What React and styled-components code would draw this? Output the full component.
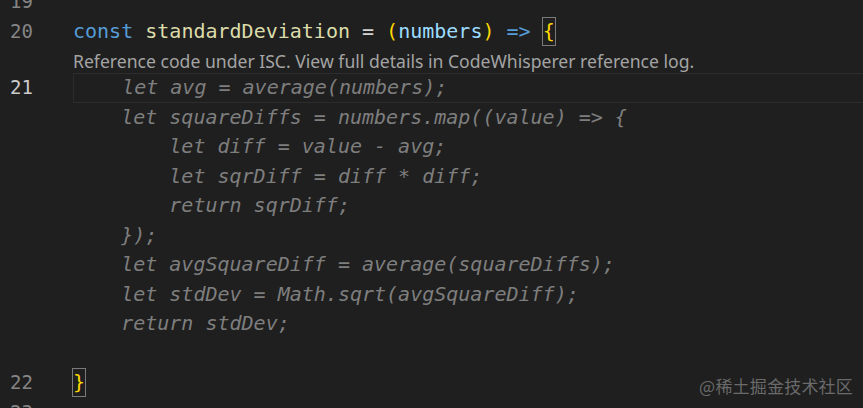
import React from 'react';
import styled, { createGlobalStyle } from 'styled-components';

const GlobalStyle = createGlobalStyle`
  html, body {
    margin: 0;
    padding: 0;
    background: #1f1f1f;
    overflow: hidden;
  }
`;

const Editor = styled.div`
  position: relative;
  width: 863px;
  height: 408px;
  overflow: hidden;
  background: #1f1f1f;
`;

const Lines = styled.div`
  display: flex;
  flex-direction: column;
  margin-top: -13px;
`;

const Row = styled.div`
  display: flex;
  align-items: stretch;
  height: ${(p) => p.h || 29.5}px;
`;

const Gutter = styled.div`
  flex: 0 0 33px;
  text-align: right;
  font-family: 'DejaVu Sans Mono', monospace;
  font-size: 19px;
  line-height: 29.5px;
  color: ${(p) => (p.active ? '#cccccc' : '#858585')};
`;

const Code = styled.div`
  flex: 1;
  margin-left: 40px;
  white-space: pre;
  font-family: 'DejaVu Sans Mono', monospace;
  font-size: 20px;
  line-height: 29.5px;
  color: #d4d4d4;
  box-sizing: border-box;
  border: ${(p) => (p.current ? '1px solid #2c2c2c' : 'none')};
  border-right: none;
  ${(p) => p.current && 'line-height: 27.5px;'}
`;

const Ghost = styled.span`
  font-style: italic;
  color: #7e7e7e;
`;

const Info = styled.div`
  flex: 1;
  margin-left: 40px;
  font-family: 'Noto Sans', 'Open Sans', sans-serif;
  font-size: 17.6px;
  line-height: 30px;
  color: #a4a4a4;
  white-space: nowrap;
`;

const Tok = styled.span`
  color: ${(p) => p.c};
`;

const Bracket = styled.span`
  color: #ffd700;
  outline: 1px solid #7a7a7a;
  outline-offset: 0;
  display: inline-block;
  line-height: 27px;
`;

const Watermark = styled.div`
  position: absolute;
  right: 10px;
  bottom: 10px;
  font-family: 'Noto Sans CJK SC', sans-serif;
  font-size: 17px;
  color: #6a6a6a;
  letter-spacing: 0.2px;
`;

const ghostLines = [
  '    let squareDiffs = numbers.map((value) => {',
  '        let diff = value - avg;',
  '        let sqrDiff = diff * diff;',
  '        return sqrDiff;',
  '    });',
  '    let avgSquareDiff = average(squareDiffs);',
  '    let stdDev = Math.sqrt(avgSquareDiff);',
  '    return stdDev;',
  '',
];

const App = () => (
  <Editor>
    <GlobalStyle />
    <Lines>
      <Row>
        <Gutter>19</Gutter>
        <Code />
      </Row>
      <Row>
        <Gutter>20</Gutter>
        <Code>
          <Tok c="#569cd6">const</Tok>{' '}
          <Tok c="#dcdcaa">standardDeviation</Tok>{' = '}
          <Tok c="#ffd700">(</Tok>
          <Tok c="#9cdcfe">numbers</Tok>
          <Tok c="#ffd700">)</Tok>{' '}
          <Tok c="#569cd6">=&gt;</Tok>{' '}
          <Bracket>{'{'}</Bracket>
        </Code>
      </Row>
      <Row h={27}>
        <Gutter />
        <Info>Reference code under ISC. View full details in CodeWhisperer reference log.</Info>
      </Row>
      <Row>
        <Gutter active>21</Gutter>
        <Code current>
          <Ghost>{'    let avg = average(numbers);'}</Ghost>
        </Code>
      </Row>
      {ghostLines.map((line, i) => (
        <Row key={i}>
          <Gutter />
          <Code>
            <Ghost>{line}</Ghost>
          </Code>
        </Row>
      ))}
      <Row>
        <Gutter>22</Gutter>
        <Code>
          <Bracket>{'}'}</Bracket>
        </Code>
      </Row>
      <Row>
        <Gutter>23</Gutter>
        <Code />
      </Row>
    </Lines>
    <Watermark>@稀土掘金技术社区</Watermark>
  </Editor>
);

export default App;
